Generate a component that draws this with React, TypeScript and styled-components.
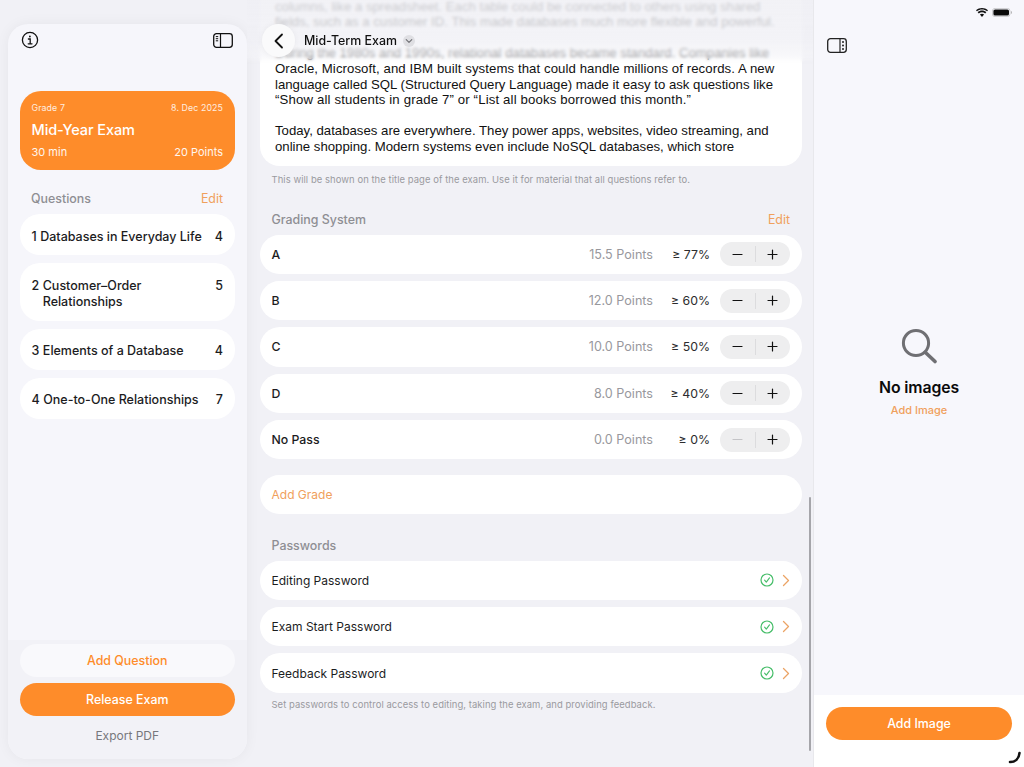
import React from 'react'
import styled, { createGlobalStyle } from 'styled-components'

const orange = '#fe8c2a'
const softOrange = '#f0a05c'

const GlobalStyle = createGlobalStyle`
  html, body {
    margin: 0;
    padding: 0;
    background: #f1f1f6;
    font-family: 'Inter', 'Liberation Sans', sans-serif;
  }
`

const Page = styled.div`
  position: relative;
  display: flex;
  width: 1024px;
  height: 767px;
  overflow: hidden;
  background: #f1f1f6;
`

const Sidebar = styled.aside`
  display: flex;
  flex-direction: column;
  flex: 0 0 239px;
  margin: 24px 0 8px 8px;
  border-radius: 20px;
  overflow: hidden;
  background: #f6f6fb;
  box-shadow: 0 0 14px rgba(0, 0, 0, 0.05);
`

const SidebarTop = styled.div`
  flex: 1;
  padding: 0 12px 0 11.5px;
`

const SidebarBar = styled.div`
  display: flex;
  align-items: center;
  justify-content: space-between;
  height: 32px;
  padding: 0 2px 0 1px;
  margin-bottom: 35px;
`

const ExamCard = styled.div`
  display: flex;
  flex-direction: column;
  height: 79px;
  box-sizing: border-box;
  padding: 10px 12px 0;
  border-radius: 21px;
  background: ${orange};
  color: #fff;
`

const ExamMeta = styled.div`
  display: flex;
  justify-content: space-between;
  font-size: 8.8px;
  line-height: 14px;
  letter-spacing: 0.1px;
  opacity: 0.85;
`

const ExamTitle = styled.div`
  margin-top: 4px;
  font-size: 14.5px;
  line-height: 22px;
  font-weight: 500;
  letter-spacing: -0.1px;
`

const ExamFoot = styled.div`
  display: flex;
  justify-content: space-between;
  margin-top: 3px;
  font-size: 11px;
  line-height: 16px;
  opacity: 0.92;
`

const SectionHead = styled.div<{ $top: number }>`
  display: flex;
  justify-content: space-between;
  align-items: center;
  height: 17px;
  margin: ${(p) => p.$top}px 12px 7px 11.5px;
  font-size: 12.4px;
  font-weight: 500;
  color: #8e8e93;
`

const EditLink = styled.span`
  font-weight: 400;
  color: ${softOrange};
`

const QuestionList = styled.div`
  display: flex;
  flex-direction: column;
  gap: 8px;
`

const QuestionRow = styled.div`
  display: flex;
  align-items: flex-start;
  padding: 14.5px 12px 10px;
  border-radius: 20px;
  background: #fff;
  font-size: 12.5px;
  line-height: 16.5px;
  font-weight: 500;
  color: #1c1c1e;
`

const QuestionIndex = styled.span`
  margin-right: 3.5px;
`

const QuestionName = styled.span`
  flex: 1;
`

const SidebarBottom = styled.div`
  display: flex;
  flex-direction: column;
  height: 119px;
  box-sizing: border-box;
  padding: 4px 12px 0 11.5px;
  background: #f2f2f7;
`

const PillButton = styled.div<{ $solid?: boolean }>`
  display: flex;
  align-items: center;
  justify-content: center;
  height: 33px;
  margin-bottom: 6px;
  border-radius: 17px;
  font-size: 12.4px;
  font-weight: 500;
  background: ${(p) => (p.$solid ? orange : '#f9f9fc')};
  color: ${(p) => (p.$solid ? '#fff' : orange)};
`

const ExportLink = styled.div`
  margin-top: 2px;
  text-align: center;
  font-size: 12px;
  line-height: 24px;
  color: #77777c;
`

const Main = styled.main`
  position: relative;
  flex: 0 0 566px;
  box-sizing: border-box;
  padding: 0 11px 0 13px;
  overflow: hidden;
`

const ScrollContent = styled.div`
  margin-top: -14px;
`

const TextCard = styled.div`
  box-sizing: border-box;
  height: 180px;
  padding: 12.6px 15px 0;
  border-radius: 20px;
  background: #fff;
  font-family: 'Liberation Sans', Arial, sans-serif;
  font-size: 13.2px;
  line-height: 15.6px;
  color: #111;
`

const TextLine = styled.div<{ $track?: number }>`
  min-height: 15.6px;
  white-space: pre;
  letter-spacing: ${(p) => p.$track ?? 0}px;
`

const Note = styled.div<{ $top: number }>`
  margin: ${(p) => p.$top}px 12px 0 11.5px;
  font-size: 9.45px;
  line-height: 12px;
  letter-spacing: 0.06px;
  color: #9a9a9f;
`

const RowStack = styled.div<{ $top?: number }>`
  display: flex;
  flex-direction: column;
  gap: 7.1px;
  margin-top: ${(p) => p.$top ?? 0}px;
`

const Row = styled.div`
  display: flex;
  align-items: center;
  height: 39.3px;
  padding: 0 12px 0 11.5px;
  border-radius: 20px;
  background: #fff;
  font-size: 12.3px;
  color: #1c1c1e;
`

const RowLabel = styled.span<{ $strong?: boolean; $accent?: boolean }>`
  flex: 1;
  font-size: ${(p) => (p.$strong ? 12.3 : 12)}px;
  font-weight: ${(p) => (p.$strong ? 500 : 400)};
  color: ${(p) => (p.$accent ? softOrange : '#1c1c1e')};
`

const PointsText = styled.span`
  font-size: 12.6px;
  color: #98989d;
`

const PercentText = styled.span`
  width: 57px;
  text-align: right;
  color: #2c2c2e;
`

const Stepper = styled.div`
  display: flex;
  align-items: center;
  width: 70px;
  height: 24px;
  margin-left: 10px;
  border-radius: 12px;
  background: #eeeeef;
`

const StepButton = styled.div`
  flex: 1;
  display: flex;
  align-items: center;
  justify-content: center;
`

const StepDivider = styled.div`
  width: 1px;
  height: 16px;
  background: #dcdcde;
`

const StatusIcons = styled.div`
  display: flex;
  align-items: center;
  gap: 4px;
`

const BlurHeader = styled.div`
  position: absolute;
  top: 0;
  left: 0;
  right: 0;
  height: 64px;
  background: linear-gradient(rgba(239, 239, 244, 0.84), rgba(240, 240, 245, 0.78) 62%, rgba(243, 243, 247, 0.68) 84%, rgba(245, 245, 248, 0.2));
  backdrop-filter: blur(1.8px);
  mask-image: linear-gradient(#000 90%, transparent);
`

const TitleBar = styled.div`
  position: absolute;
  top: 24px;
  left: 15px;
  display: flex;
  align-items: center;
`

const BackButton = styled.div`
  display: flex;
  align-items: center;
  justify-content: center;
  width: 33px;
  height: 33px;
  margin-right: 9px;
  border-radius: 50%;
  background: #fafafb;
  box-shadow: 0 0 6px rgba(0, 0, 0, 0.05);
`

const ExamName = styled.span`
  font-size: 12.4px;
  font-weight: 500;
  color: #111;
`

const TitleChevron = styled.span`
  display: flex;
  align-items: center;
  justify-content: center;
  width: 12px;
  height: 12px;
  margin-left: 6px;
  border-radius: 50%;
  background: #dfdfe3;
`

const ScrollThumb = styled.div`
  position: absolute;
  top: 497px;
  right: 2px;
  width: 2px;
  height: 254px;
  border-radius: 1px;
  background: #a5a5aa;
`

const Inspector = styled.aside`
  display: flex;
  flex-direction: column;
  flex: 1;
  border-left: 1px solid #e8e8ec;
  background: #fff;
`

const InspectorBody = styled.div`
  flex: 1;
  display: flex;
  flex-direction: column;
  background: #f7f7fc;
`

const StatusBar = styled.div`
  display: flex;
  justify-content: flex-end;
  align-items: center;
  height: 24px;
  padding-right: 12px;
`

const InspectorBar = styled.div`
  display: flex;
  align-items: center;
  height: 42px;
  padding-left: 13px;
`

const EmptyState = styled.div`
  flex: 1;
  display: flex;
  flex-direction: column;
  align-items: center;
  padding-top: 262px;
`

const EmptyTitle = styled.div`
  margin-top: 14px;
  font-size: 15.8px;
  line-height: 20px;
  font-weight: 600;
  letter-spacing: -0.1px;
  color: #0a0a0a;
`

const EmptyLink = styled.div`
  margin-top: 5px;
  font-size: 11px;
  line-height: 14px;
  font-weight: 500;
  color: ${softOrange};
`

const InspectorFoot = styled.div`
  height: 72px;
  box-sizing: border-box;
  padding: 12px 12px 0;
`

const CornerArc = styled.svg`
  position: absolute;
  right: 2px;
  bottom: 3px;
`

const ChevronSvg = styled.svg`
  margin-left: 8px;
`

const InfoIcon = () => (
  <svg width="18" height="18" viewBox="0 0 18 18" fill="none" stroke="#111" strokeLinecap="round">
    <circle cx="9" cy="9" r="7.6" strokeWidth="1.3" />
    <path d="M7.4 8H9.2V12.8M7.2 12.8H11" strokeWidth="1.3" />
    <circle cx="8.9" cy="5.5" r="0.9" fill="#111" stroke="none" />
  </svg>
)

const PanelLeftIcon = () => (
  <svg width="20" height="15" viewBox="0 0 20 15" fill="none" stroke="#111">
    <rect x="0.7" y="0.7" width="18.6" height="13.6" rx="2.8" strokeWidth="1.3" />
    <path d="M7.5 1V14" strokeWidth="1.2" />
    <path d="M2.8 3.6H5.2M2.8 5.7H5.2M2.8 7.8H5.2" strokeWidth="1" />
  </svg>
)

const PanelRightIcon = () => (
  <svg width="20" height="15" viewBox="0 0 20 15" fill="none" stroke="#222">
    <rect x="0.7" y="0.7" width="18.6" height="13.6" rx="2.8" strokeWidth="1.3" />
    <path d="M13 1V14" strokeWidth="1.2" />
    <circle cx="16" cy="4" r="1" fill="#222" stroke="none" />
    <circle cx="16" cy="7.5" r="1" fill="#222" stroke="none" />
    <circle cx="16" cy="11" r="1" fill="#222" stroke="none" />
  </svg>
)

const BackIcon = () => (
  <svg width="12" height="16" viewBox="0 0 12 16" fill="none" stroke="#111" strokeWidth="1.8" strokeLinecap="round" strokeLinejoin="round">
    <path d="M9 1.5L2.5 8L9 14.5" />
  </svg>
)

const SmallChevron = () => (
  <svg width="8" height="6" viewBox="0 0 8 6" fill="none" stroke="#6e6e73" strokeWidth="1.1" strokeLinecap="round" strokeLinejoin="round">
    <path d="M1.2 1.6L4 4.3L6.8 1.6" />
  </svg>
)

const MinusIcon = ({ disabled }: { disabled?: boolean }) => (
  <svg width="11" height="11" viewBox="0 0 11 11" stroke={disabled ? '#c4c4c7' : '#111'} strokeWidth="1.2" strokeLinecap="round">
    <path d="M1 5.5H10" />
  </svg>
)

const PlusIcon = () => (
  <svg width="11" height="11" viewBox="0 0 11 11" stroke="#111" strokeWidth="1.2" strokeLinecap="round">
    <path d="M1 5.5H10M5.5 1V10" />
  </svg>
)

const CheckIcon = () => (
  <svg width="14" height="14" viewBox="0 0 14 14" fill="none" stroke="#45bd68" strokeLinecap="round" strokeLinejoin="round">
    <circle cx="7" cy="7" r="6" strokeWidth="1.2" />
    <path d="M4.6 7.2L6.3 9.2L9.5 4.9" strokeWidth="1.1" />
  </svg>
)

const RowChevron = () => (
  <ChevronSvg width="8" height="13" viewBox="0 0 8 13" fill="none" stroke="#eba465" strokeWidth="1.3" strokeLinecap="round" strokeLinejoin="round">
    <path d="M1.5 1.5L6.5 6.5L1.5 11.5" />
  </ChevronSvg>
)

const SearchIcon = () => (
  <svg width="36" height="36" viewBox="0 0 36 36" fill="none" stroke="#6f6f73" strokeLinecap="round">
    <circle cx="15" cy="15" r="12.6" strokeWidth="3" />
    <path d="M24.5 24.5L34 33.5" strokeWidth="3.6" />
  </svg>
)

const WifiIcon = () => (
  <svg width="12" height="9" viewBox="0 0 12 9" fill="#111">
    <path d="M6 9L3.9 6.6C5.1 5.6 6.9 5.6 8.1 6.6ZM2.8 5.4L1.6 4.1C4.1 1.9 7.9 1.9 10.4 4.1L9.2 5.4C7.3 3.8 4.7 3.8 2.8 5.4ZM0.9 3.3L0 2.3C3.4 -0.7 8.6 -0.7 12 2.3L11.1 3.3C8.2 0.8 3.8 0.8 0.9 3.3Z" />
  </svg>
)

const BatteryIcon = () => (
  <svg width="20" height="9" viewBox="0 0 20 9">
    <rect x="0.4" y="0.4" width="17.6" height="8.2" rx="2.6" fill="none" stroke="#c2c2c4" strokeWidth="0.8" />
    <rect x="1.4" y="1.4" width="15.6" height="6.2" rx="1.7" fill="#0a0a0a" />
    <path d="M19 3V6C19.6 5.8 20 5.2 20 4.5C20 3.8 19.6 3.2 19 3Z" fill="#b5b5b7" />
  </svg>
)

const questions = [
  { name: 'Databases in Everyday Life', count: 4 },
  { name: 'Customer–Order Relationships', count: 5 },
  { name: 'Elements of a Database', count: 4 },
  { name: 'One-to-One Relationships', count: 7 },
]

const grades = [
  { name: 'A', points: '15.5', percent: 77 },
  { name: 'B', points: '12.0', percent: 60 },
  { name: 'C', points: '10.0', percent: 50 },
  { name: 'D', points: '8.0', percent: 40 },
  { name: 'No Pass', points: '0.0', percent: 0 },
]

const passwords = ['Editing Password', 'Exam Start Password', 'Feedback Password']

const material = [
  { text: 'columns, like a spreadsheet. Each table could be connected to others using shared' },
  { text: 'fields, such as a customer ID. This made databases much more flexible and powerful.' },
  { text: '' },
  { text: 'During the 1980s and 1990s, relational databases became standard. Companies like' },
  { text: 'Oracle, Microsoft, and IBM built systems that could handle millions of records. A new', track: 0.08 },
  { text: 'language called SQL (Structured Query Language) made it easy to ask questions like' },
  { text: '“Show all students in grade 7” or “List all books borrowed this month.”', track: 0.15 },
  { text: '' },
  { text: 'Today, databases are everywhere. They power apps, websites, video streaming, and' },
  { text: 'online shopping. Modern systems even include NoSQL databases, which store' },
]

export default function App() {
  return (
    <Page>
      <GlobalStyle />
      <Sidebar>
        <SidebarTop>
          <SidebarBar>
            <InfoIcon />
            <PanelLeftIcon />
          </SidebarBar>
          <ExamCard>
            <ExamMeta>
              <span>Grade 7</span>
              <span>8. Dec 2025</span>
            </ExamMeta>
            <ExamTitle>Mid-Year Exam</ExamTitle>
            <ExamFoot>
              <span>30 min</span>
              <span>20 Points</span>
            </ExamFoot>
          </ExamCard>
          <SectionHead $top={20}>
            <span>Questions</span>
            <EditLink>Edit</EditLink>
          </SectionHead>
          <QuestionList>
            {questions.map((q, i) => (
              <QuestionRow key={q.name}>
                <QuestionIndex>{i + 1}</QuestionIndex>
                <QuestionName>{q.name}</QuestionName>
                <span>{q.count}</span>
              </QuestionRow>
            ))}
          </QuestionList>
        </SidebarTop>
        <SidebarBottom>
          <PillButton>Add Question</PillButton>
          <PillButton $solid>Release Exam</PillButton>
          <ExportLink>Export PDF</ExportLink>
        </SidebarBottom>
      </Sidebar>

      <Main>
        <ScrollContent>
          <TextCard>
            {material.map((line, i) => (
              <TextLine key={i} $track={line.track}>
                {line.text}
              </TextLine>
            ))}
          </TextCard>
          <Note $top={8}>This will be shown on the title page of the exam. Use it for material that all questions refer to.</Note>
          <SectionHead $top={24.5}>
            <span>Grading System</span>
            <EditLink>Edit</EditLink>
          </SectionHead>
          <RowStack>
            {grades.map((g) => (
              <Row key={g.name}>
                <RowLabel $strong>{g.name}</RowLabel>
                <PointsText>{g.points} Points</PointsText>
                <PercentText>≥ {g.percent}%</PercentText>
                <Stepper>
                  <StepButton>
                    <MinusIcon disabled={g.percent === 0} />
                  </StepButton>
                  <StepDivider />
                  <StepButton>
                    <PlusIcon />
                  </StepButton>
                </Stepper>
              </Row>
            ))}
          </RowStack>
          <RowStack $top={15.5}>
            <Row>
              <RowLabel $accent>Add Grade</RowLabel>
            </Row>
          </RowStack>
          <SectionHead $top={22.5}>
            <span>Passwords</span>
          </SectionHead>
          <RowStack>
            {passwords.map((name) => (
              <Row key={name}>
                <RowLabel>{name}</RowLabel>
                <CheckIcon />
                <RowChevron />
              </Row>
            ))}
          </RowStack>
          <Note $top={6.5}>Set passwords to control access to editing, taking the exam, and providing feedback.</Note>
        </ScrollContent>
        <BlurHeader />
        <TitleBar>
          <BackButton>
            <BackIcon />
          </BackButton>
          <ExamName>Mid-Term Exam</ExamName>
          <TitleChevron>
            <SmallChevron />
          </TitleChevron>
        </TitleBar>
        <ScrollThumb />
      </Main>

      <Inspector>
        <InspectorBody>
          <StatusBar>
            <StatusIcons>
              <WifiIcon />
              <BatteryIcon />
            </StatusIcons>
          </StatusBar>
          <InspectorBar>
            <PanelRightIcon />
          </InspectorBar>
          <EmptyState>
            <SearchIcon />
            <EmptyTitle>No images</EmptyTitle>
            <EmptyLink>Add Image</EmptyLink>
          </EmptyState>
        </InspectorBody>
        <InspectorFoot>
          <PillButton $solid>Add Image</PillButton>
        </InspectorFoot>
      </Inspector>
      <CornerArc width="14" height="14" viewBox="0 0 14 14" fill="none" stroke="#111" strokeWidth="2.6" strokeLinecap="round">
        <path d="M2 12C7 12 11 9 11.5 3" />
      </CornerArc>
    </Page>
  )
}
